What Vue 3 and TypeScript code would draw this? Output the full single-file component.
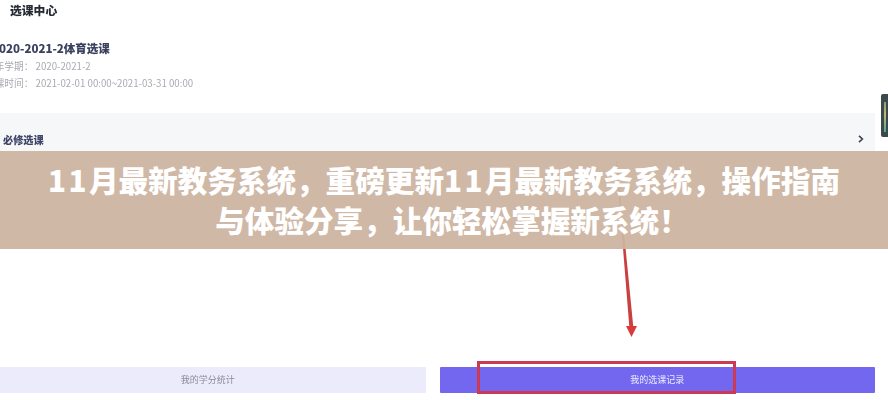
<script setup lang="ts">
const rows: { label: string; value: string }[] = [
  { label: '学年学期：', value: '2020-2021-2' },
  { label: '选课时间：', value: '2021-02-01 00:00~2021-03-31 00:00' },
]
</script>

<template>
  <div class="page">
    <div class="shot">
      <h1 class="heading">选课中心</h1>
      <section class="course">
        <h2 class="course-title">2020-2021-2体育选课</h2>
        <p v-for="row in rows" :key="row.label" class="meta">{{ row.label }}&nbsp;{{ row.value }}</p>
      </section>
      <section class="required">
        <span class="required-label">必修选课</span>
        <svg class="chevron" width="6" height="8" viewBox="0 0 6 8"><path d="M1 .8 4.400 4 1 7.200" fill="none" stroke="#3c4352" stroke-width="1.6" /></svg>
      </section>
      <div class="spacer"></div>
      <div class="actions">
        <button class="btn btn-light">我的学分统计</button>
        <button class="btn btn-primary">我的选课记录</button>
      </div>
    </div>

    <svg class="arrow" width="30" height="190" viewBox="0 0 30 190">
      <path d="M0 2 1 2 17.500 170 13.500 170Z" fill="#c8403f" />
      <path d="M10 167 21 167 15.500 178Z" fill="#d93a3c" />
    </svg>
    <div class="mark"></div>
    <div class="handle"><span class="handle-strip"></span></div>

    <div class="banner">
      <p class="banner-text"><span class="num">11</span>月最新教务系统，重磅更新<span class="num">11</span>月最新教务系统，操作指南<br />与体验分享，让你轻松掌握新系统<span class="bang">！</span></p>
    </div>
  </div>
</template>

<style>
html, body { margin: 0; background: #fff; }
</style>

<style scoped>
.page {
  position: relative;
  width: 888px;
  height: 400px;
  overflow: hidden;
  background: #fff;
  font-family: "Noto Sans CJK SC", "Noto Sans", sans-serif;
}
.shot {
  display: flex;
  flex-direction: column;
  width: 875px;
  height: 400px;
  filter: blur(0.45px);
}
.heading {
  margin: 0;
  padding: 1px 0 0 10px;
  height: 24px;
  font-size: 11.800px;
  line-height: 17px;
  font-weight: 900;
  color: #262a33;
  box-sizing: border-box;
}
.course {
  padding-top: 13px;
  height: 89px;
  box-sizing: border-box;
}
.course-title {
  margin: 0 0 -1px -8px;
  font-size: 11.500px;
  line-height: 22px;
  font-weight: 900;
  color: #3a4060;
}
.meta {
  margin: 0 0 0 -15px;
  height: 17px;
  font-size: 9.700px;
  line-height: 17px;
  color: #a9abb2;
}
.required {
  display: flex;
  align-items: flex-end;
  justify-content: space-between;
  height: 38px;
  padding: 0 11px 0 3px;
  box-sizing: border-box;
  background: #f6f7f9;
}
.required-label {
  font-size: 10.200px;
  line-height: 20px;
  font-weight: 900;
  color: #3e4566;
  transform: translateY(-1px);
}
.chevron { margin-bottom: 8px; }
.spacer { flex: 1; }
.actions {
  display: flex;
  gap: 14px;
  height: 26px;
  margin: 0 0 7px -10px;
}
.btn {
  flex: 1;
  padding: 0;
  border: 0;
  border-radius: 1px;
  font: inherit;
  font-size: 9px;
  line-height: 26px;
}
.btn-light { background: #ebebfb; color: #8a8aa0; }
.btn-primary { background: #7367f0; color: #eeeefc; }
.arrow {
  position: absolute;
  left: 616px;
  top: 159px;
}
.mark {
  position: absolute;
  left: 477px;
  top: 361px;
  width: 259px;
  height: 33px;
  box-sizing: border-box;
  border: 3px solid #cb3a52;
}
.handle {
  position: absolute;
  right: 0;
  top: 94px;
  display: flex;
  justify-content: center;
  width: 7px;
  height: 43px;
  border-radius: 2px 0 0 2px;
  background: #3d4a4c;
}
.handle-strip {
  width: 2px;
  margin: 8px 0 5px;
  background: linear-gradient(#8f9a70, #c4b878 40%, #5aa58f);
}
.banner {
  position: absolute;
  left: 0;
  top: 151px;
  width: 888px;
  height: 98px;
  display: flex;
  align-items: center;
  justify-content: center;
  background: rgba(205, 180, 160, 0.94);
}
.banner-text {
  margin: 0;
  font-size: 29.600px;
  line-height: 40px;
  font-weight: 900;
  color: #fff;
  text-align: center;
  white-space: nowrap;
}
.num { letter-spacing: 2.400px; }
.bang { margin-right: -16px; }
</style>
